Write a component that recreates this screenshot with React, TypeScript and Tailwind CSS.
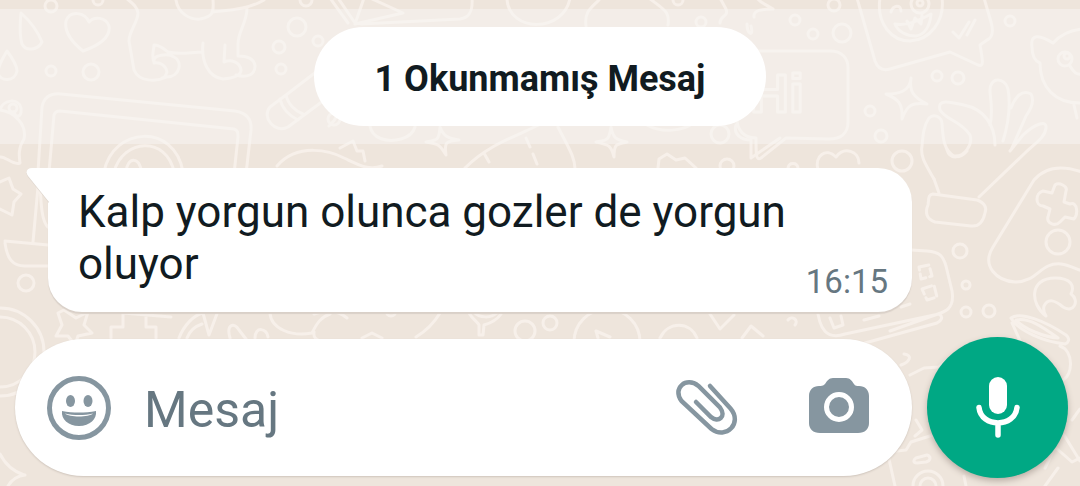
import { FC, ReactNode } from 'react'

const Wallpaper: FC = () => (
	<svg className="absolute left-0 top-0 -z-10" width="1080" height="486" viewBox="0 0 1080 486" fill="none" stroke="#f7f0ea" strokeWidth="3" strokeLinecap="round" strokeLinejoin="round" aria-hidden="true">
		{/* drops, heart and bubbles */}
		<path d="M21 13c10 9 17 19 21 29-4 8-16 10-20 2-3-10-2-21-1-31zM7 51c6 8 10 14 10 20-2 11-17 11-19 2 0-8 5-15 9-22zM83 51c-10-8-19-19-17-30 4-11 19-9 23 1 5-6 17-5 20 4 2 12-12 20-26 25z" />
		<circle cx="51" cy="6" r="6" />
		<circle cx="98" cy="0" r="5" />
		<circle cx="51" cy="71" r="5" />
		<circle cx="91" cy="72" r="8" />
		<circle cx="297" cy="27" r="9" />
		<circle cx="279" cy="47" r="6" />
		<circle cx="281" cy="69" r="5" />
		<circle cx="318" cy="41" r="5" />
		<circle cx="306" cy="0" r="6" />
		{/* unicorn legs */}
		<path d="M126-2c6 5 11 8 12 15 0 9-9 18-9 28l5 29c5 12 22 12 33 7 13 0 16-16 7-20-6-4-21-2-20 4m0 2c7-1 12 3 13 9-1 3-2 6-5 6M154 62c-3-6 0-12 0-17 6 0 10 4 14 7 11 3 23 0 35 0m0-9c-2 18 5 34 20 36 12-1 18-4 18-9-1-8-10-11-17-8l1-17M247 8c0 15-9 23-9 36v12c6 0 16 1 17 10 0 9-8 12-19 9M176 0c2 14 15 20 24 19 13-2 14-7 13-19m0 12c18-2 36-3 51-12" />
		{/* picture frame */}
		<path d="M38 172l4-65c2-10 8-14 19-13l174 17c12 2 17 8 16 19l-5 44M49 172l5-57c1-3 3-4 6-4l174 18c4 1 4 4 4 8l-4 37" />
		<path d="M104 172c9-46 71-49 79 0M114 172c9-34 53-36 60 0M126 172c1-16 15-15 15 0" />
		<path d="M0 110c3-11 19-12 21-2 1 10-5 10-7 4M0 110c15 2 27 15 24 29-6 9-5 17-4 24-7 3-14-7-20-6" />
		<circle cx="13" cy="108" r="4" />
		{/* flashlight */}
		<path d="M346 49l-60 46-16 12c-9 10 5 27 18 20l39-29M280 99c2 9 9 17 18 21M286 95c2 9 9 16 17 19M277 166c21-24 54-15 67-8 15 7 25 13 38 8M340 148l13-7 4 10 6 0 2 10" />
		<path d="M330-2l18 25M338-2l17 25M364-2l-9 26 48-11-33-15M361 24l99-5c9-1 13-7 12-21M507-1c2 34 57 34 63-1M586 26c-2-14 5-18 13-26M649-2c15 12 21 13 19 27M720 23c0-8 9-6 6-14l-6-11h11M747 24c0 10 7 14 4 2M757-2c3 5 12 8 16 11-11 0-20 1-19 8" />
		{/* sparkles and scribbles between the panels */}
		<path d="M338 95c4 12 0 23-9 31M370 126c2 12 16 17 31 13 7-2 12-5 14-12M440 127c-1 14-3 13-14 15 13 2 14 3 20 13-2-13 0-14 13-15-11-2-15-3-19-13zM611 127c-2 14-4 13-15 15 13 3 15 3 18 15 0-13 2-13 13-15-11-2-14-4-16-15zM465 168c20-20 41-28 63-38l17-8M526 138l4 9M558 127c10 20 17 30 17 42M484 153l5 9M533 154l4 10M647 125c16 9 36 5 45-1M658 168l1-9 8-5 9 6 9-2 11 10M736 125c-3 9 5 15 15 15v18l29-20" />
		<circle cx="720" cy="134" r="9" />
		<circle cx="727" cy="166" r="7" />
		<circle cx="701" cy="22" r="5" />
		<circle cx="678" cy="0" r="5" />
		<circle cx="334" cy="119" r="6" />
		{/* speech bubble with greeting */}
		<path d="M745 51h85c12 0 18 7 18 17v54c0 12-8 17-19 17l-43-1-25 20c-5 3-5-3-5-20-11 0-20-7-19-22" />
		<text x="750" y="112" fontFamily="Liberation Sans, Arial, sans-serif" fontSize="54" fontWeight="700">
			Hi
		</text>
		{/* laughing bubble */}
		<path d="M857-2l18 63c3 8 8 10 15 8l60-17 28 13c6 2 5-3 2-20l7-5c7-3 6-11 4-18l-7-24M880-2c-4 26 12 43 30 43 20-1 35-20 32-43M895 24c12 2 23-3 36-10-1 13-7 21-15 22-9 0-18-4-21-12zM907 21l4 8 4-11 6 6 1-9M953 32l6 6 10-16M967 35l8-15" />
		<path d="M891 12c2-7 10-8 10-1" />
		<circle cx="920" cy="4" r="9" />
		<circle cx="920" cy="3" r="3" />
		<circle cx="842" cy="33" r="9" />
		<circle cx="795" cy="20" r="5" />
		<circle cx="813" cy="34" r="5" />
		<circle cx="834" cy="5" r="6" />
		<circle cx="1010" cy="21" r="5" />
		<circle cx="937" cy="76" r="5" />
		<circle cx="958" cy="78" r="6" />
		<circle cx="870" cy="111" r="5" />
		<circle cx="881" cy="136" r="6" />
		<circle cx="902" cy="161" r="10" />
		<path d="M911 78c-1 14-13 16-25 16 12 5 17 9 16 25 5-14 10-17 25-15-14-7-18-13-16-26zM818 170c-4-14 8-23 18-13 8-11 23-6 23 6M788 168c1-6 9-6 10 0" />
		{/* ok hand */}
		<path d="M934 179c-8-14-14-22-12-33 1-12 2-21 7-28 5-5 13-1 13 6 1 12 1 26 12 32 11 1 19-12 16-21-9-14-24-15-30-25-3-12 11-8 24-5 20 4 31 20 31 40M990 125c3-11 1-24 0-33-1-16 15-15 18-3 3 18 0 36-5 52M1011 108c4-11 11-19 20-14 4 7 0 15-5 22l-15 34M1010 151l13-16c13-12 24-15 23-7-1 10-12 16-21 25l-46 44" />
		<path d="M933 194l44 6c8 3 10 8 8 13-2 9-6 14-14 13l-36-4c-9-3-10-10-7-17 1-7 0-10 5-11zM934 179l5 14M947 150c3 10 14 8 20 1" />
		{/* cat face */}
		<path d="M1082 29c-10 1-21 5-29 14-14-9-23-9-21 4 0 8 3 14 8 16 0 24 15 41 42 40M1074 105l3 13M1070 66c4 7 7 9 12 8" />
		<circle cx="1065" cy="59" r="7" />
		<circle cx="1067" cy="56" r="3" />
		{/* gamepad */}
		<path d="M1082 172c-20-7-37-5-48 8l-41 67c-12 19 4 34 22 35 23 0 25-20 46-18 8 1 13 4 21 7M1055 185c4-3 13 1 11 6l-2 11 6 2c8-3 8 11 4 15l-9-2-5 5c-5 5-14 1-12-5l2-8-7-3c-8 0-8-13 0-15l9 2z" />
		<circle cx="1058" cy="242" r="12" />
		<circle cx="960" cy="251" r="7" />
		<circle cx="966" cy="285" r="4" />
		<circle cx="966" cy="312" r="5" />
		<circle cx="989" cy="311" r="6" />
		<path d="M1046 316c-16-12-17-38 9-38 16 0 20 8 16 16 9 6 3 20-8 13-8-7-15-9-19-1-1 4 0 7 2 10zM1011 318c9-7 34 3 55 17 5 4 2 8-1 9-20-2-47-13-54-26zM1016 320c13-3 28 8 42 18-14-1-34-9-42-18zM1012 323l10 22M1060 346c14 5 13 29 3 34" />
		{/* clock radio */}
		<path d="M911 250l16 1c13 1 16 5 19 15l6 25c3 18-7 21-17 24l-45 16M817 306c2 24 10 34 28 28l94-20c5 3 2 7-2 9l-72 20M830 318l4 10 9-3-2-9M864 320l15-4" />
		<path d="M919 267l10-2 3 11-11 3zM922 289l12-4 3 12-10 3zM901 307l9-3" strokeDasharray="10 4" />
		{/* left edge: star and ship */}
		<path d="M0 182l9-4 4 11 8 5-7 8-2 13-12-6M39 176l-6 66M5 243c2 15 7 23 20 23h23M5 241l43 4M40 184c1 22 2 38 8 43" />
		<circle cx="26" cy="283" r="8" />
		<circle cx="0" cy="352" r="44" />
		<circle cx="0" cy="352" r="35" />
		<path d="M58 313l6-3 12 8 12-6-4 13 8 8-14 3-3 9-7-9-12 0 6-11zM111 338v-11h12v-14l48 4M146 314v13h10v11M179 338c5-13 15-23 24-25l6 22 9-24M187 338c3-8 9-12 15-14M230 338c-4-14 4-16 9-8l7 9M255 338c0-12 12-10 13-1M270 313c1 16 22 24 42 20 5-10 9-16 18-19M314 332c-1 7 4 8 8 10M314 314c14-5 24-3 33 4M362 338l10-5 10 5M440 313c-6 10-14 18-24 24M469 313c4 7 9 9 10 12v10h4l1-10c7-2 13-5 17-11M474 312c5 6 17 7 24 0" />
		<circle cx="391" cy="311" r="5" />
		<circle cx="525" cy="331" r="10" />
		<circle cx="550" cy="323" r="7" />
		<circle cx="607" cy="342" r="33" />
		<path d="M598 338l-2-7 14 6M660 338c8-17 30-17 37 0M710 314l10 15 14-14M742 338l9-12 12 10M788 320c4-5 11 0 7 5" />
		{/* camera and scraps round the send button */}
		<path d="M904 354c9 1 6 8-3 11M910 375l14-7 15-1 19-16M915 436l7-6-6-10M895 486l-6-27c0-5 3-7 8-8l9-1 5-8 22-7 5 8 8 0M916 458l11-3c5 2 3 6-1 7l-9 1c-4 0-4-3-1-5z" />
		<circle cx="928" cy="486" r="15" />
		<circle cx="928" cy="486" r="8" />
		<path d="M966 486l-2-10M1045 486l13-18M1045 468l10-21 17 15 8-4M1064 435l16 26M1072 420l8-11M0 454c4 8 12 17 24 21M8 486c4-7 9-10 17-11" />
	</svg>
)

const IconButton: FC<{ label: string; children: ReactNode }> = ({ label, children }) => (
	<button type="button" aria-label={label} className="shrink-0 text-[#8696a0]">
		{children}
	</button>
)

const UnreadBanner: FC = () => (
	<div className="mt-[9px] flex justify-center bg-[#f7f6f3]/50 py-[18px]">
		<div className="rounded-full bg-white px-[61px] pt-[29px] pb-[23px] font-bold text-[36px] leading-[47px] text-[#111b21]">1 Okunmamış Mesaj</div>
	</div>
)

const Message: FC<{ text: string; time: string }> = ({ text, time }) => (
	<div className="relative mt-6 mr-[168px] ml-12 flex items-end justify-between gap-4 rounded-[34px] rounded-tl-none bg-white pt-[18px] pr-6 pb-[22px] pl-[30px] shadow-[0_2px_1px_#d9d0c8]">
		<svg className="absolute top-0 -left-[22px] drop-shadow-[0_1px_0_#ddd4cc]" width="23" height="34" viewBox="0 0 23 34" fill="#fff" aria-hidden="true">
			<path d="M23 0H6C1 0-1 4 2 8L23 34z" />
		</svg>
		<p className="text-[44px] leading-[52px] text-[#111b21]">{text}</p>
		<time className="-mb-3 text-[33px] leading-10 text-[#667781]">{time}</time>
	</div>
)

const Composer: FC = () => (
	<form className="mt-[25px] flex items-center gap-[15px] pr-3 pl-[15px]" onSubmit={e => e.preventDefault()}>
		<div className="flex h-[137px] min-w-0 flex-1 items-center rounded-full bg-white pr-[43px] pl-8 shadow-[0_1px_2px_#cfc5bc]">
			<IconButton label="Emoji">
				<svg width="64" height="64" viewBox="0 0 64 64" fill="currentColor">
					<circle cx="32" cy="32" r="29.5" fill="none" stroke="currentColor" strokeWidth="5" />
					<ellipse cx="23.500" cy="25" rx="4.5" ry="6" />
					<ellipse cx="41" cy="25" rx="4.5" ry="6" />
					<path d="M15 35c11 2 23 2 34 0 1 8-6 15-17 15s-18-7-17-15z" />
					<path d="M18 37.500c9 2 19 2 28 0-4 4-24 4-28 0z" fill="#fff" />
				</svg>
			</IconButton>
			<input type="text" aria-label="Mesaj" placeholder="Mesaj" className="ml-[33px] h-16 min-w-0 flex-1 pt-1 text-[50px] leading-[60px] text-[#111b21] outline-none placeholder:text-[#667781]" />
			<IconButton label="Dosya ekle">
				<svg width="64" height="60" viewBox="0 -2 64 60" fill="none" stroke="currentColor" strokeWidth="4.500" strokeLinecap="round">
					<path d="M35 6L55.500 28.500C68 43 51 60 36.500 49L6.500 21C-3 8.500 11-4 23.500 6L45 27.500C52 37 43 43 36 37L21 22" />
				</svg>
			</IconButton>
			<div className="ml-[70px] flex">
				<IconButton label="Kamera">
					<svg width="60" height="60" viewBox="0 0 60 60" fill="currentColor">
						<path d="M24 0h13c4 0 6 3 8 6 1 2 3 2 5 2 6 0 10 4 10 10v27c0 6-4 10-11 10H11C4 55 0 51 0 45V18C0 12 4 8 10 8c2 0 4 0 6-2 2-3 4-6 8-6z" />
						<circle cx="30" cy="29" r="12.500" fill="none" stroke="#fff" strokeWidth="5" />
					</svg>
				</IconButton>
			</div>
		</div>
		<button type="button" aria-label="Sesli mesaj" className="flex size-[141px] shrink-0 items-center justify-center rounded-full bg-[#00a884] text-white shadow-[0_3px_6px_#b9aea5]">
			<svg width="46" height="62" viewBox="0 0 46 62" fill="none" stroke="currentColor" strokeWidth="5.500" strokeLinecap="round">
				<rect x="14" y="0" width="18" height="37" rx="9" fill="currentColor" stroke="none" />
				<path d="M4 30.500C6 51 40 51 42 30.500M23 46v12" />
			</svg>
		</button>
	</form>
)

const App: FC = () => (
	<main className="relative isolate flow-root min-h-screen overflow-hidden bg-[#eee5dc] font-[Roboto,sans-serif]">
		<Wallpaper />
		<UnreadBanner />
		<Message text="Kalp yorgun olunca gozler de yorgun oluyor" time="16:15" />
		<Composer />
	</main>
)

export default App
